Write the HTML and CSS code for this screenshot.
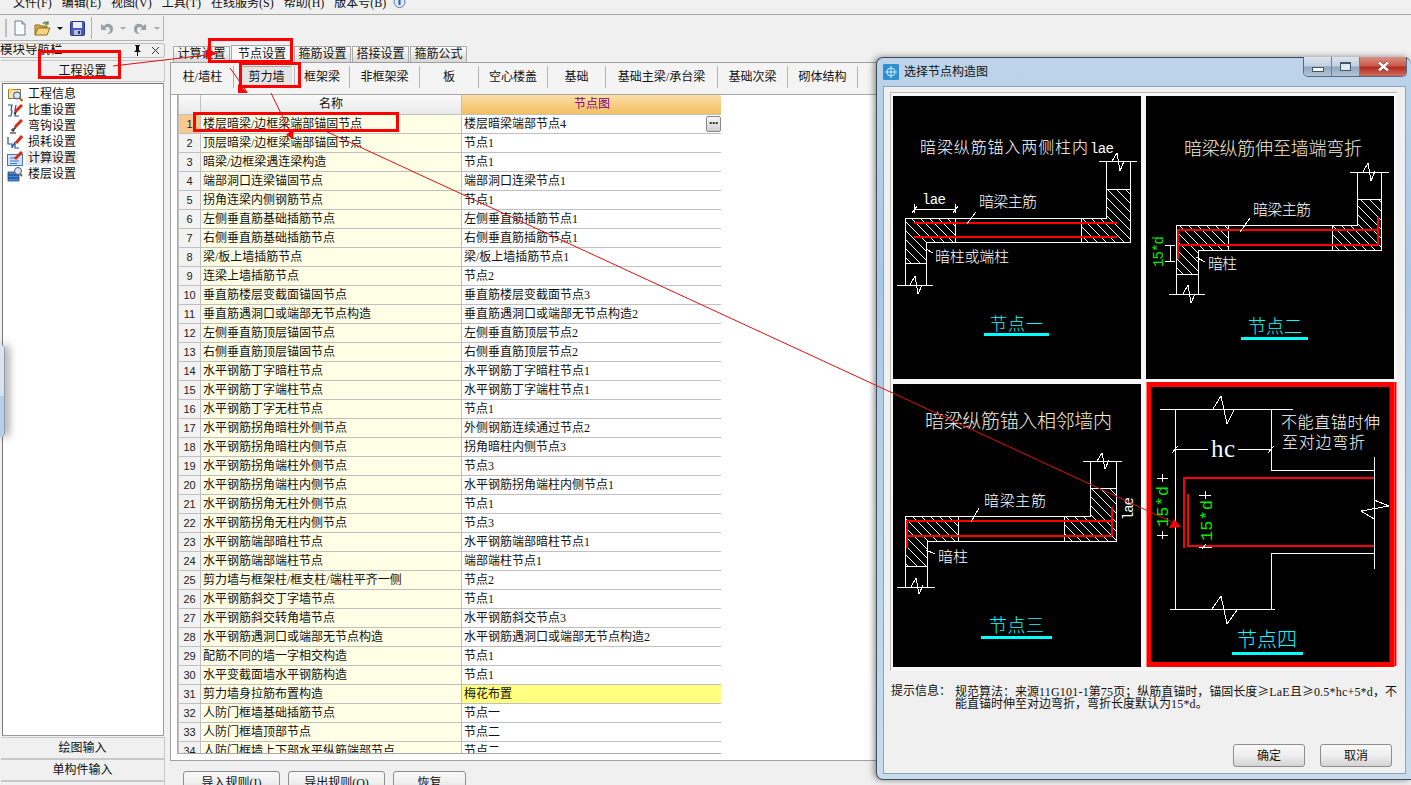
FILE: index.html
```html
<!DOCTYPE html>
<html lang="zh-CN">
<head>
<meta charset="utf-8">
<title>选择节点构造图</title>
<link rel="stylesheet" href="styles.css">
</head>
<body>
<div class="app">
  <nav class="menu">
    <span class="mi m1">文件(F)</span><span class="mi">编辑(E)</span><span class="mi">视图(V)</span><span class="mi">工具(T)</span><span class="mi">在线服务(S)</span><span class="mi">帮助(H)</span><span class="mi">版本号(B)</span>
    <svg class="help" width="13" height="14" viewBox="0 0 13 14"><circle cx="6.500" cy="5" r="5.500" fill="#dfe9f5" stroke="#5b7fb0"/><rect x="5.500" y="2" width="2" height="6" fill="#2f5fa8"/></svg>
  </nav>
  <div class="toolbar">
    <div class="tools">
      <i class="grip"></i>
      <svg class="ti" width="14" height="16" viewBox="0 0 14 16"><path d="M2 1h7l3 3v11H2z" fill="#f8fafd" stroke="#6f7f98"/><path d="M9 1v3h3" fill="#cfd9e8" stroke="#6f7f98"/></svg>
      <svg class="ti t-open" width="17" height="15" viewBox="0 0 17 15"><path d="M1 4h5l1 1h6v2H5L1 14z" fill="#d9b04f" stroke="#8d6e24"/><path d="M1 14l3-7h12l-3 7z" fill="#f4d67e" stroke="#8d6e24"/><path d="M9 3c1-2 3-2 5-1M14 0v3h-3" fill="none" stroke="#5f8a4a" stroke-width="1.300"/></svg>
      <i class="caret dark"></i>
      <svg class="ti t-save" width="15" height="15" viewBox="0 0 15 15"><rect x=".5" y=".5" width="14" height="14" rx="1" fill="#4a5bc0" stroke="#2a3580"/><rect x="3" y="1" width="9" height="6" fill="#e8edf8"/><rect x="4" y="9" width="7" height="5" fill="#b8c0d8"/><rect x="8" y="10" width="2" height="3" fill="#2a3580"/></svg>
      <i class="tsep"></i>
      <svg class="ti" width="15" height="15" viewBox="0 0 15 15"><path d="M2 3v6h6L6 7c2-2 5-1 5 2 0 2-1 3-3 4 4 0 6-2 6-5 0-5-6-7-9-3z" fill="#9aa0a6"/></svg>
      <i class="caret"></i>
      <svg class="ti t-redo" width="15" height="15" viewBox="0 0 15 15"><path d="M13 3v6H7l2-2C7 5 4 6 4 9c0 2 1 3 3 4-4 0-6-2-6-5 0-5 6-7 9-3z" fill="#9aa0a6"/></svg>
      <i class="caret"></i>
    </div>
  </div>
  <main class="main">
    <aside class="nav">
      <header class="nav-head">
        <span class="nav-title">模块导航栏</span>
        <svg class="pin" width="9" height="11" viewBox="0 0 9 11"><path d="M2 0h5v1H6v4l2 2H5v4H4V7H1l2-2V1H2z" fill="#111"/></svg>
        <svg class="x" width="9" height="9" viewBox="0 0 9 9"><path d="M1 1l7 7M8 1L1 8" stroke="#333" fill="none"/></svg>
      </header>
      <button class="nav-btn nav-first">工程设置</button>
      <ul class="tree">
        <li><svg width="16" height="15" viewBox="0 0 16 15"><rect x="1.500" y="2.500" width="12" height="9" fill="#efe3b8" stroke="#8a7a50"/><path d="M4 0l1 2 2 1-2 1-1 2-1-2-2-1 2-1z" fill="#ffd83a"/><circle cx="10" cy="8.500" r="3.500" fill="#d6e6f5" stroke="#3d4f66"/><path d="M12.500 11l3 3" stroke="#a06a20" stroke-width="2"/></svg><span>工程信息</span></li>
        <li><svg width="16" height="15" viewBox="0 0 16 15"><path d="M1 2h4L4 7l1 1-1 5H1M12 13H8l1-5-1-1 1-5" fill="none" stroke="#24509c" stroke-width="1.200"/><path d="M8 9L15 2" stroke="#d92a1c" stroke-width="3"/><path d="M8 9l-1 2 2-1" fill="#333" stroke="#333"/></svg><span>比重设置</span></li>
        <li><svg width="16" height="15" viewBox="0 0 16 15"><path d="M6 9v4M3 14h6M4 11h4" fill="none" stroke="#111"/><path d="M8 8L15 1" stroke="#d92a1c" stroke-width="3"/><path d="M8 8l-1 2 2-1" fill="#333" stroke="#333"/></svg><span>弯钩设置</span></li>
        <li><svg width="16" height="15" viewBox="0 0 16 15"><path d="M1 2v7h4v4l3-6v6h4" fill="none" stroke="#24509c" stroke-width="1.200"/><path d="M9 8L15 1" stroke="#d92a1c" stroke-width="3"/></svg><span>损耗设置</span></li>
        <li><svg width="16" height="15" viewBox="0 0 16 15"><rect x=".5" y="3.500" width="15" height="11" fill="#cfe2f5" stroke="#3f78c0"/><path d="M3 7h6M3 10h9M3 12.500h7" stroke="#3f78c0"/><path d="M8 8L15 1" stroke="#d92a1c" stroke-width="3"/></svg><span class="sel">计算设置</span></li>
        <li><svg width="16" height="15" viewBox="0 0 16 15"><path d="M1 5h11v3H1zM1 8h11v3H1zM1 11h11v3H1z" fill="#4a86d8" stroke="#1f4a8a" stroke-width=".8"/><circle cx="11" cy="4" r="3.500" fill="#dbe6f2" stroke="#556"/><path d="M13 7l2 2" stroke="#764" stroke-width="2"/></svg><span>楼层设置</span></li>
      </ul>
      <button class="nav-btn">绘图输入</button>
      <button class="nav-btn">单构件输入</button>
      <button class="nav-btn" aria-hidden="true"></button>
    </aside>
    <section class="content">
      <div class="tabs">
        <span class="tab">计算设置</span><span class="tab active">节点设置</span><span class="tab">箍筋设置</span><span class="tab">搭接设置</span><span class="tab">箍筋公式</span>
      </div>
      <div class="panel">
        <div class="subtabs">
          <span>柱/墙柱</span><span class="on"><b>剪力墙</b></span><span>框架梁</span><span>非框架梁</span><span>板</span><span>空心楼盖</span><span>基础</span><span>基础主梁/承台梁</span><span>基础次梁</span><span>砌体结构</span>
        </div>
        <div class="gridwrap">
          <table class="grid">
            <thead><tr><th class="n"></th><th class="name">名称</th><th class="val">节点图</th></tr></thead>
            <tbody>
              <tr><td class="n cur">1</td><td>楼层暗梁/边框梁端部锚固节点</td><td class="v v-more">楼层暗梁端部节点4<i class="more">···</i></td></tr>
              <tr><td class="n">2</td><td>顶层暗梁/边框梁端部锚固节点</td><td class="v">节点1</td></tr>
              <tr><td class="n">3</td><td>暗梁/边框梁遇连梁构造</td><td class="v">节点1</td></tr>
              <tr><td class="n">4</td><td>端部洞口连梁锚固节点</td><td class="v">端部洞口连梁节点1</td></tr>
              <tr><td class="n">5</td><td>拐角连梁内侧钢筋节点</td><td class="v">节点1</td></tr>
              <tr><td class="n">6</td><td>左侧垂直筋基础插筋节点</td><td class="v">左侧垂直筋插筋节点1</td></tr>
              <tr><td class="n">7</td><td>右侧垂直筋基础插筋节点</td><td class="v">右侧垂直筋插筋节点1</td></tr>
              <tr><td class="n">8</td><td>梁/板上墙插筋节点</td><td class="v">梁/板上墙插筋节点1</td></tr>
              <tr><td class="n">9</td><td>连梁上墙插筋节点</td><td class="v">节点2</td></tr>
              <tr><td class="n">10</td><td>垂直筋楼层变截面锚固节点</td><td class="v">垂直筋楼层变截面节点3</td></tr>
              <tr><td class="n">11</td><td>垂直筋遇洞口或端部无节点构造</td><td class="v">垂直筋遇洞口或端部无节点构造2</td></tr>
              <tr><td class="n">12</td><td>左侧垂直筋顶层锚固节点</td><td class="v">左侧垂直筋顶层节点2</td></tr>
              <tr><td class="n">13</td><td>右侧垂直筋顶层锚固节点</td><td class="v">右侧垂直筋顶层节点2</td></tr>
              <tr><td class="n">14</td><td>水平钢筋丁字暗柱节点</td><td class="v">水平钢筋丁字暗柱节点1</td></tr>
              <tr><td class="n">15</td><td>水平钢筋丁字端柱节点</td><td class="v">水平钢筋丁字端柱节点1</td></tr>
              <tr><td class="n">16</td><td>水平钢筋丁字无柱节点</td><td class="v">节点1</td></tr>
              <tr><td class="n">17</td><td>水平钢筋拐角暗柱外侧节点</td><td class="v">外侧钢筋连续通过节点2</td></tr>
              <tr><td class="n">18</td><td>水平钢筋拐角暗柱内侧节点</td><td class="v">拐角暗柱内侧节点3</td></tr>
              <tr><td class="n">19</td><td>水平钢筋拐角端柱外侧节点</td><td class="v">节点3</td></tr>
              <tr><td class="n">20</td><td>水平钢筋拐角端柱内侧节点</td><td class="v">水平钢筋拐角端柱内侧节点1</td></tr>
              <tr><td class="n">21</td><td>水平钢筋拐角无柱外侧节点</td><td class="v">节点1</td></tr>
              <tr><td class="n">22</td><td>水平钢筋拐角无柱内侧节点</td><td class="v">节点3</td></tr>
              <tr><td class="n">23</td><td>水平钢筋端部暗柱节点</td><td class="v">水平钢筋端部暗柱节点1</td></tr>
              <tr><td class="n">24</td><td>水平钢筋端部端柱节点</td><td class="v">端部端柱节点1</td></tr>
              <tr><td class="n">25</td><td>剪力墙与框架柱/框支柱/端柱平齐一侧</td><td class="v">节点2</td></tr>
              <tr><td class="n">26</td><td>水平钢筋斜交丁字墙节点</td><td class="v">节点1</td></tr>
              <tr><td class="n">27</td><td>水平钢筋斜交转角墙节点</td><td class="v">水平钢筋斜交节点3</td></tr>
              <tr><td class="n">28</td><td>水平钢筋遇洞口或端部无节点构造</td><td class="v">水平钢筋遇洞口或端部无节点构造2</td></tr>
              <tr><td class="n">29</td><td>配筋不同的墙一字相交构造</td><td class="v">节点1</td></tr>
              <tr><td class="n">30</td><td>水平变截面墙水平钢筋构造</td><td class="v">节点1</td></tr>
              <tr><td class="n">31</td><td>剪力墙身拉筋布置构造</td><td class="v hl">梅花布置</td></tr>
              <tr><td class="n">32</td><td>人防门框墙基础插筋节点</td><td class="v">节点一</td></tr>
              <tr><td class="n">33</td><td>人防门框墙顶部节点</td><td class="v">节点二</td></tr>
              <tr><td class="n">34</td><td>人防门框墙上下部水平纵筋端部节点</td><td class="v">节点二</td></tr>
            </tbody>
          </table>
        </div>
      </div>
      <div class="actions">
        <button class="act a1">导入规则(I)</button><button class="act a2">导出规则(O)</button><button class="act a3">恢复</button>
      </div>
    </section>
  </main>
</div>

<div class="edge"></div>

<div class="dialog">
  <header class="dlg-title">
    <svg class="dlg-icon" width="16" height="16" viewBox="0 0 16 16"><rect width="16" height="16" rx="1" fill="#2f8fd0"/><path d="M8 2v12M2 8h12" stroke="#cfeaff" fill="none"/><circle cx="8" cy="8" r="4" stroke="#cfeaff" fill="none"/></svg>
    <span class="dlg-name">选择节点构造图</span>
    <div class="wbtns">
      <span class="wb"><i class="wmin"></i></span><span class="wb"><i class="wmax"></i></span><span class="wb wclose">
        <svg width="13" height="11" viewBox="0 0 13 11"><path d="M2 1.500l9 8M11 1.500l-9 8" stroke="#6a2a25" stroke-width="3.600" fill="none"/><path d="M2 1.500l9 8M11 1.500l-9 8" stroke="#fff" stroke-width="2.400" fill="none"/></svg></span>
    </div>
  </header>
  <div class="dlg-body">
    <div class="figs">
      <figure class="fig">
        <svg class="draw" viewBox="893 96 248 283" width="248" height="283">
          <defs>
            <pattern id="hatch" patternUnits="userSpaceOnUse" width="9" height="9"><path d="M-1 -1L10 10M-1 8L1 10M8 -1L10 1" stroke="#fff" stroke-width="1" shape-rendering="crispEdges"/></pattern>
          </defs>
          <text class="tx" x="920" y="153" font-size="16" textLength="168">暗梁纵筋锚入两侧柱内</text>
          <text class="mono" x="1090" y="153" font-size="14" textLength="24">lae</text>
          <path class="ha" d="M905 218H955V242H926V263H905z"/>
          <path class="ha" d="M1081 218H1106V189H1130V242H1081z"/>
          <path class="ln" d="M905 218H1106V161M1130 161V242H926V285M905 285V218M1099 161H1137M897 285H933M905 263H926M1106 189H1130M955 218V242M1081 218V242"/>
          <path class="ln" d="M1112 161l5-8 3 18 4-10M910 285l5-9 3 18 4-9"/>
          <path class="rb" d="M914 223H1117M914 237H1117"/>
          <path class="ln" d="M914 209H955M914 204V213M955 204V213M912 213l5-7M953 213l5-7"/>
          <text class="mono" x="922" y="204" font-size="14" textLength="24">lae</text>
          <text class="tx" x="979" y="207" font-size="15" textLength="58">暗梁主筋</text>
          <path class="ln" d="M976 212L967 224M926 249L933 253"/>
          <text class="tx" x="935" y="262" font-size="15" textLength="74">暗柱或端柱</text>
          <text class="cy" x="990" y="330" font-size="17" textLength="53">节点一</text>
          <path class="ul" d="M984 334H1049"/>
        </svg>
      </figure>
      <figure class="fig fig-b">
        <svg class="draw" viewBox="1146 96 248 283" width="248" height="283">
          <text class="tx tint" x="1184" y="155" font-size="18" textLength="178">暗梁纵筋伸至墙端弯折</text>
          <path class="ha" d="M1176 225H1228V250H1198V274H1176z"/>
          <path class="ha" d="M1332 225H1357V199H1381V250H1332z"/>
          <path class="ln" d="M1176 225H1357V172M1381 172V250H1198V294M1176 294V225M1350 172H1389M1169 294H1205M1176 274H1198M1357 199H1381M1228 225V250M1332 225V250"/>
          <path class="ln" d="M1363 172l5-9 3 18 4-10M1183 294l5-9 3 18 4-9"/>
          <path class="rb" d="M1178 259V230H1378M1178 245H1378M1378 217V245"/>
          <text class="gr" font-size="14" transform="translate(1163 267) rotate(-90)" textLength="31">15*d</text>
          <path class="ln" d="M1170 245V261M1165 245H1175M1165 261H1175"/>
          <text class="tx" x="1253" y="215" font-size="15" textLength="58">暗梁主筋</text>
          <path class="ln" d="M1250 218L1240 232M1196 257L1205 262"/>
          <text class="tx" x="1208" y="269" font-size="15" textLength="29">暗柱</text>
          <text class="cy" x="1248" y="333" font-size="18" textLength="54">节点二</text>
          <path class="ul" d="M1241 338H1308"/>
        </svg>
      </figure>
      <figure class="fig fig-c">
        <svg class="draw" viewBox="893 384 248 283" width="248" height="283">
          <text class="tx tint" x="925" y="428" font-size="19" textLength="187">暗梁纵筋锚入相邻墙内</text>
          <path class="ha" d="M905 516H958V541H927V566H905z"/>
          <path class="ha" d="M1064 516H1090V488H1116V541H1064z"/>
          <path class="ln" d="M905 516H1090V461M1116 461V541H927V587M905 587V516M1083 461H1122M897 587H935M905 566H927M1090 488H1116M958 516V541M1064 516V541"/>
          <path class="ln" d="M1097 461l5-8 3 16 4-9M911 587l5-9 3 16 4-9"/>
          <path class="rb" d="M907 548V521H1112M907 536H1112M1112 507V536"/>
          <text class="mono" font-size="14" transform="translate(1133 520) rotate(-90)" textLength="23">lae</text>
          <text class="tx" x="984" y="506" font-size="15" textLength="62">暗梁主筋</text>
          <path class="ln" d="M979 508L971 522M926 550L935 554"/>
          <text class="tx" x="938" y="562" font-size="15" textLength="30">暗柱</text>
          <text class="cy" x="989" y="632" font-size="18" textLength="55">节点三</text>
          <path class="ul" d="M981 637H1052"/>
        </svg>
      </figure>
      <figure class="fig fig-on">
        <svg class="draw" viewBox="1146 382 251 286" width="251" height="286">
          <path class="frame" d="M1149 384.500H1392V664.500H1149z"/>
          <path class="framex" d="M1395.500 382V666"/>
          <path class="ln" d="M1160 409H1293M1175 409V609M1271 409V470H1374M1374 457V569M1374 553H1271V609M1170 609H1275"/>
          <path class="ln" d="M1213 409l8-13 6 28 7-14M1212 609l9-13 6 28 10-14M1374 500l15 6-28 5 13 8"/>
          <text class="hc" x="1211" y="457" font-size="25" textLength="24">hc</text>
          <path class="ln" d="M1175 449H1208M1238 449H1271M1172 453l6-7M1268 453l6-7"/>
          <text class="tx" x="1281" y="428" font-size="16" textLength="99">不能直锚时伸</text>
          <text class="tx" x="1282" y="448" font-size="16" textLength="83">至对边弯折</text>
          <path class="rb" d="M1374 478H1184V548M1188 494V546H1374"/>
          <text class="gr" font-size="17" transform="translate(1168 527) rotate(-90)" textLength="41">15*d</text>
          <text class="gr" font-size="17" transform="translate(1212 541) rotate(-90)" textLength="41">15*d</text>
          <path class="ln" d="M1157 478H1168M1162 474l1 8M1157 535H1168M1162 531l1 8M1199 495H1211M1205 491l1 8M1199 547H1212M1206 544l-4 5"/>
          <text class="cy" x="1237" y="647" font-size="20" textLength="60">节点四</text>
          <path class="ul" d="M1232 653H1303"/>
        </svg>
      </figure>
    </div>
    <div class="hint">
      <span class="hint-label">提示信息：</span>
      <p class="hint-text">规范算法：来源<span class="lat">11G101-1</span>第<span class="lat">75</span>页；纵筋直锚时，锚固长度<span class="ge">≥</span><span class="lat">LaE</span>且<span class="ge">≥</span><span class="lat">0.5*hc+5*d</span>，不<br>能直锚时伸至对边弯折，弯折长度默认为<span class="lat">15*d</span>。</p>
    </div>
    <div class="dlg-actions">
      <button class="act dbtn">确定</button><button class="act dbtn">取消</button>
    </div>
  </div>
</div>

<svg class="marks" width="1411" height="785" viewBox="0 0 1411 785">
  <g class="mk-box">
    <rect x="39.500" y="51.500" width="80" height="26"/>
    <rect x="209.500" y="39.500" width="82" height="22"/>
    <rect x="240.500" y="63.500" width="59" height="23"/>
    <rect x="194.500" y="113.500" width="203" height="17"/>
  </g>
  <g class="mk-line">
    <path d="M113 66L215 54"/>
    <path d="M230 68L247 92"/>
    <path d="M271 93L292 136"/>
    <path d="M323 130L1172 522"/>
  </g>
  <g class="mk-tip">
    <path d="M205 50L218 53 206 58z"/>
    <path d="M238 84L248 93 238 93z"/>
    <path d="M286 135L293 139 294 128z"/>
    <path d="M1169 528L1181 527 1174 519z"/>
  </g>
</svg>
</body>
</html>
```
FILE: styles.css
```css
* { box-sizing: border-box; }
html, body { margin: 0; height: 100%; overflow: hidden; }
body {
  width: 1411px;
  height: 785px;
  position: relative;
  background: #f0f0f0;
  color: #111;
  font: 12px/14px "Liberation Serif", "Noto Sans CJK SC", sans-serif;
}
.app { display: flex; flex-direction: column; height: 785px; }

/* menu */
.menu {
  height: 15px;
  flex: none;
  display: flex;
  align-items: flex-start;
  padding-left: 13px;
  gap: 10px;
  overflow: hidden;
  border-bottom: 1px solid #a8a8a8;
}
.mi { margin-top: -4px; white-space: nowrap; }
.help { margin-top: -3px; margin-left: -3px; }

/* toolbar */
.toolbar { height: 26px; flex: none; padding-top: 1px; }
.tools {
  width: 164px;
  height: 25px;
  display: flex;
  align-items: center;
  border-right: 1px solid #b4b4b4;
  border-bottom: 1px solid #b4b4b4;
  padding-left: 5px;
}
.grip { width: 2px; height: 18px; background: #bdbdbd; margin-right: 6px; }
.ti { flex: none; }
.t-open { margin-left: 7px; }
.t-save { margin-left: 7px; }
.t-redo { margin-left: 7px; }
.caret {
  width: 0; height: 0;
  margin-left: 6px;
  border: 3px solid transparent;
  border-top: 3px solid #aaa;
  border-bottom: 0;
}
.caret.dark { border-top-color: #111; }
.tsep { width: 1px; height: 22px; background: #b0b0b0; margin: 0 7px 0 6px; }

/* main */
.main { flex: 1; display: flex; min-height: 0; padding-top: 2px; }
.nav { width: 165px; flex: none; display: flex; flex-direction: column; overflow: hidden; }
.nav-head {
  height: 15px;
  flex: none;
  border: 1px solid #bdbdbd;
  border-left: 0;
  border-radius: 0 3px 3px 0;
  display: flex;
  align-items: center;
  overflow: hidden;
}
.nav-title { font-size: 12.500px; flex: 1; margin-top: -1px; }
.pin { margin-right: 9px; }
.x { margin-right: 4px; }
.nav-btn {
  flex: none;
  height: 22px;
  padding: 0;
  margin: 0 0 0 1px;
  width: 164px;
  background: #f0f0f0;
  border: 1px solid #c8c8c8;
  border-left: 0;
  font: inherit;
  color: #111;
}
.nav-first { margin-top: 2px; margin-bottom: 1px; }
.tree {
  flex: none;
  height: 653px;
  margin: 0 1px 1px 2px;
  padding: 2px 0 0 4px;
  list-style: none;
  background: #fff;
  border: 1px solid #9c9c9c;
  border-top-color: #777;
  border-left-color: #777;
}
.tree li { height: 16px; display: flex; align-items: center; gap: 5px; }
.tree svg { flex: none; }
.tree .sel { background: #ececec; padding: 0 2px; margin-left: -2px; }

/* content */
.content { flex: 1; min-width: 0; margin-left: 5px; display: flex; flex-direction: column; }
.tabs { height: 19px; flex: none; display: flex; align-items: flex-end; padding-left: 3px; gap: 1px; }
.tab {
  width: 57px;
  height: 16px;
  background: linear-gradient(#fdfdfd, #d8d8d8);
  border: 1px solid #a9a9a9;
  border-bottom: 0;
  text-align: center;
  line-height: 15px;
}
.tab.active { background: #f8f8f8; height: 18px; width: 62px; line-height: 16px; position: relative; top: 1px; }
.panel {
  height: 699px;
  flex: none;
  border: 1px solid #a0a0a0;
  border-right: 0;
  background: #fff;
  display: flex;
  flex-direction: column;
}
.subtabs {
  height: 32px;
  flex: none;
  display: grid;
  grid-template-columns: 62px 61px 55px 70px 59px 69px 58px 112px 70px 70px;
  align-items: center;
  background: #f4f4f4;
  border-bottom: 1px solid #a8a8a8;
  padding: 3px 0 6px 1px;
}
.subtabs span {
  height: 22px;
  line-height: 22px;
  text-align: center;
  border-right: 1px solid #b4b4b4;
}
.subtabs .on { padding: 0 2px 0 7px; }
.subtabs b {
  display: block;
  font-weight: 400;
  background: #e4e4e4;
  border: 1px solid #a8a8a8;
  border-bottom-color: #f0f0f0;
  border-right-color: #e0e0e0;
  line-height: 20px;
  height: 22px;
}
.gridwrap {
  height: 659px;
  flex: none;
  width: 544px;
  margin-left: 6px;
  overflow: hidden;
  border: 1px solid #a8a8a8;
  border-top: 0;
  border-right: 0;
}
.grid { border-collapse: collapse; table-layout: fixed; width: 544px; }
.grid th { height: 19px; padding: 0; font-weight: 400; line-height: 18px; border: 1px solid #c0c0c0; border-top: 0; background: linear-gradient(#fafafa, #e9e9e9); }
.grid th.n { width: 22px; }
.grid th.name { width: 261px; }
.grid th.val { width: 261px; color: #800080; background: linear-gradient(#fbdfa6, #f2bf62); }
.grid td {
  height: 19px;
  padding: 0 0 0 2px;
  line-height: 18px;
  white-space: nowrap;
  overflow: hidden;
  background: #ffffe6;
  border: 1px solid #c0c0c0;
}
.grid td.n {
  padding: 0;
  text-align: center;
  background: #f2f2f2;
  font-family: "Liberation Sans", sans-serif;
  font-size: 11px;
  color: #222;
}
.grid td.cur { background: #f6c98e; }
.grid td.v { background: #fff; }
.grid td.hl { background: #ffff80; }
.v-more { position: relative; }
.more {
  position: absolute;
  right: 1px;
  top: 1px;
  width: 15px;
  height: 16px;
  border: 1px solid #888;
  border-radius: 2px;
  background: linear-gradient(#f6f6f6, #d0d0d0);
  font: 700 12px/13px "Liberation Sans", sans-serif;
  text-align: center;
  letter-spacing: -1px;
}
.actions { flex: none; display: flex; padding: 10px 0 0 13px; gap: 9px; }
.act {
  height: 24px;
  padding: 0;
  font: inherit;
  color: #111;
  background: linear-gradient(#f8f8f8 0, #f0f0f0 45%, #d4d4d4 100%);
  border: 1px solid #8e8e8e;
  border-radius: 3px;
}
.a1, .a2 { width: 97px; }
.a2 { margin-left: -1px; margin-right: -1px; }
.a3 { width: 73px; }

/* desktop scrap at the window's left edge */
.edge {
  position: absolute;
  left: 0;
  top: 345px;
  width: 5px;
  height: 92px;
  border-radius: 0 4px 4px 0;
  background: linear-gradient(#dbe7f1 0, #d5e2ee 55%, #b7cfe6 56%, #b7cfe6 100%);
  border-right: 1px solid #8f9aa6;
  box-shadow: 3px 0 8px rgba(0, 0, 0, .55);
}

/* dialog */
.dialog {
  position: absolute;
  left: 876px;
  top: 57px;
  width: 535px;
  height: 723px;
  display: flex;
  flex-direction: column;
  background: linear-gradient(#bdd4ea, #a9c8e6 30%, #c8dced);
  border: 1px solid #3d4a58;
  border-right: 0;
  border-radius: 7px 7px 0 7px;
  box-shadow: -2px 0 6px rgba(0, 0, 0, .45);
  padding: 0 5px 5px 6px;
}
.dlg-title { height: 28px; flex: none; display: flex; align-items: center; position: relative; }
.dlg-name { margin-left: 5px; color: #111; font-size: 12px; }
.wbtns {
  position: absolute;
  right: -1px;
  top: -1px;
  height: 20px;
  display: flex;
  border: 1px solid #5b6a7a;
  border-top: 0;
  border-radius: 0 0 5px 5px;
  overflow: hidden;
}
.wb { width: 28px; display: flex; align-items: center; justify-content: center; background: linear-gradient(#dbe4ee, #c2d0df 48%, #8fa6bd 52%, #b4c6d8); border-right: 1px solid #6f7f8f; }
.wmin { width: 12px; height: 5px; border: 1px solid #44566a; background: #fff; margin-top: 6px; }
.wmax { width: 11px; height: 9px; border: 1px solid #44566a; border-top-width: 2px; background: #dfe8f2; }
.wclose { width: 46px; background: linear-gradient(#dd8f86, #c9584a 48%, #b02a1c 52%, #cf6e60); border-right: 0; }
.dlg-body {
  flex: 1;
  min-height: 0;
  background: #f0f0f0;
  border: 1px solid #8ea3b8;
  display: flex;
  flex-direction: column;
  padding: 5px 0 0 6px;
}
.figs {
  width: 507px;
  height: 579px;
  flex: none;
  display: grid;
  grid-template-columns: 248px 251px;
  grid-template-rows: 283px 286px;
  column-gap: 5px;
  row-gap: 3px;
  padding: 3px 0 0 2px;
  border-top: 1px solid #b8b8b8;
  border-left: 1px solid #b8b8b8;
  background: #f7f7f7;
  align-content: start;
}
.fig { margin: 0; background: #000; height: 283px; }
.fig-b { width: 248px; }
.fig-c { margin-top: 2px; }
.fig-on { height: 286px; background: #fff; }
.draw { display: block; }
.frame { fill: #000; stroke: #f00; stroke-width: 5; }
.framex { stroke: #f00; stroke-width: 2; fill: none; }
.ln { fill: none; stroke: #fff; stroke-width: 1; shape-rendering: crispEdges; }
.ha { fill: url(#hatch); }
.rb { fill: none; stroke: #f00; stroke-width: 2; shape-rendering: crispEdges; }
.ul { fill: none; stroke: #0ff; stroke-width: 3; shape-rendering: crispEdges; }
.tx { fill: #fff; font-family: "Noto Sans CJK SC", sans-serif; font-weight: 300; }
.mono { fill: #fff; font-family: "Liberation Mono", monospace; }
.tint { fill: #f6ecd8; }
.cy { fill: #0ff; font-family: "Noto Sans CJK SC", sans-serif; font-weight: 300; }
.gr { fill: #0e0; font-family: "Liberation Mono", monospace; }
.hc { fill: #f4f8ff; font-family: "Liberation Serif", serif; }
.hint { flex: none; display: flex; padding: 14px 0 0 1px; }
.hint-label { width: 64px; flex: none; line-height: 12px; }
.hint-text { margin: 0; width: 446px; line-height: 12px; white-space: nowrap; }
.lat { letter-spacing: .2px; }
.ge { font-family: "Noto Sans CJK SC", sans-serif; }
.dlg-actions { flex: none; display: flex; padding: 34px 0 0 343px; gap: 15px; }
.dbtn { width: 72px; height: 23px; }

/* red review marks drawn over the whole screenshot */
.marks { position: absolute; left: 0; top: 0; pointer-events: none; }
.mk-box rect { fill: none; stroke: #f00; stroke-width: 3; }
.mk-line path { fill: none; stroke: #e01010; stroke-width: 1; }
.mk-tip path { fill: #f00; }
```
